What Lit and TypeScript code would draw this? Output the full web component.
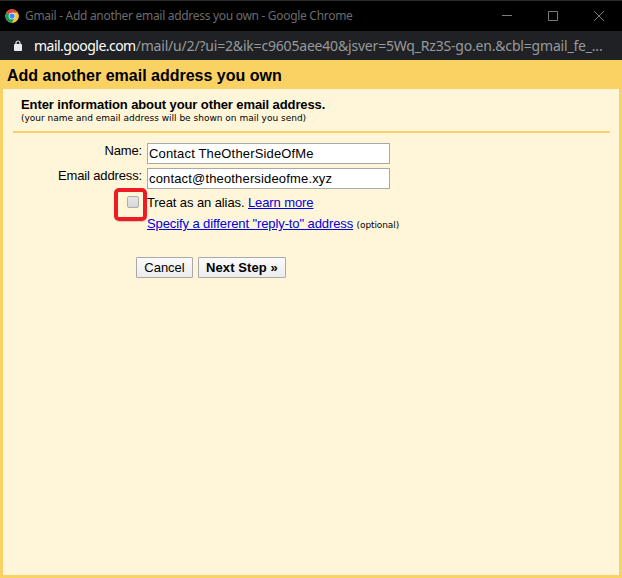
import { LitElement, html, css } from "lit";
import { customElement } from "lit/decorators.js";

@customElement("window-chrome")
class WindowChrome extends LitElement {
  static styles = css`
    :host { display: block; font-family: "Noto Sans", "Open Sans", sans-serif; white-space: nowrap; }
    .title { box-sizing: border-box; height: 31px; background: #000; border-top: 1px solid #2b2c2d; display: flex; align-items: center; padding-left: 5px; color: #6b6b6b; }
    .logo { width: 14px; height: 14px; flex: none; }
    .name { margin-left: 6px; font-size: 12px; line-height: 18px; letter-spacing: -0.3px; flex: 1; }
    .controls { width: 120px; height: 12px; flex: none; }
    .bar { height: 29px; background: #202124; display: flex; align-items: center; padding-left: 14px; color: #969a9e; }
    .lock { width: 8px; height: 12px; flex: none; }
    .url { margin-left: 12px; font-size: 14px; line-height: 20px; letter-spacing: -0.19px; }
    .host { color: #fff; letter-spacing: -0.53px; }
  `;
  render() {
    return html`
      <div class="title">
        <svg class="logo" viewBox="0 0 48 48">
          <circle cx="24" cy="24" r="23" fill="#fbc52d" />
          <path d="M24 24 4.1 12.5A23 23 0 0 1 43.9 12.5H24Z" fill="#db4437" />
          <path d="M24 24 4.1 12.5A23 23 0 0 0 24 47L34 29.7Z" fill="#169c5b" />
          <path d="M24 12.5H43.9A23 23 0 0 1 24 47L34 29.7Z" fill="#fbc52d" />
          <circle cx="24" cy="24" r="11.5" fill="#f1f1f1" />
          <circle cx="24" cy="24" r="9" fill="#4285f4" />
        </svg>
        <span class="name">Gmail - Add another email address you own - Google Chrome</span>
        <svg class="controls" viewBox="0 0 120 12" fill="none" stroke="#7b7b7b">
          <path d="M0 5.5h10M46.5 1.5h9v9h-9z" />
          <path d="M92 1l10 10M102 1 92 11" />
        </svg>
      </div>
      <div class="bar">
        <svg class="lock" viewBox="0 0 8 12">
          <path d="M2 5V3a2 2 0 0 1 4 0v2" fill="none" stroke="#e8eaed" stroke-width="1.2" />
          <rect y="4" width="8" height="7" rx=".7" fill="#e8eaed" />
        </svg>
        <span class="url"><span class="host">mail.google.com</span>/mail/u/2/?ui=2&amp;ik=c9605aee40&amp;jsver=5Wq_Rz3S-go.en.&amp;cbl=gmail_fe_...</span>
      </div>
    `;
  }
}

@customElement("app-root")
class AppRoot extends LitElement {
  static styles = css`
    :host { display: flex; flex-direction: column; height: 578px; width: 622px; overflow: hidden; background: #fad163; color: #000; font: 13px/15px "Liberation Sans", Arial, sans-serif; letter-spacing: -0.1px; white-space: nowrap; }
    window-chrome { flex: none; }
    h1 { margin: 0; height: 29px; padding: 2px 0 0 7px; box-sizing: border-box; font-size: 16px; line-height: 28px; letter-spacing: 0; flex: none; }
    .page { flex: 1; margin: 0 3px 3px; background: #fff5d9; padding: 8px 9px 0 10px; }
    .intro { height: 34px; padding-left: 8px; border-bottom: 2px solid #fad163; }
    .intro b { display: block; }
    .small { font-family: "DejaVu Sans", Verdana, sans-serif; font-size: 9px; line-height: 11px; letter-spacing: 0; }
    .intro .small { display: block; padding-top: 1px; }
    .line .small { letter-spacing: -0.1px; }
    .form { display: grid; grid-template-columns: 129px 243px; column-gap: 5px; row-gap: 4px; margin-top: 10px; }
    label { text-align: right; line-height: 15px; letter-spacing: -0.14px; }
    input[type="text"] { box-sizing: border-box; width: 243px; height: 21px; border: 1px solid #a9a9a9; padding: 0 1px; font: inherit; letter-spacing: 0.16px; color: #000; background: #fff; outline: none; border-radius: 0; }
    .options { display: grid; grid-template-columns: 33px auto; margin-left: 101px; height: 33px; }
    .mark { box-sizing: border-box; width: 33px; height: 33px; margin-top: -1px; border: 4px solid #ed1c24; border-radius: 5px; box-shadow: 0 1px 1px #8886; padding: 4px 0 0 9px; }
    .check { appearance: none; display: block; box-sizing: border-box; margin: 0; width: 12px; height: 12px; border: 1px solid #adadad; border-radius: 2px; background: linear-gradient(#e7e7e7, #d7d7d7); }
    .lines { padding-top: 6px; }
    .line { height: 21px; }
    a { color: #0000e0; text-decoration: underline; }
    .buttons { display: flex; gap: 5px; margin: 35px 0 0 123px; }
    button { box-sizing: border-box; width: 57px; height: 21px; padding: 0; border: 1px solid #a9a9a9; border-radius: 1px; background: linear-gradient(#fbfbfb, #ececec); font: inherit; letter-spacing: 0; color: #000; }
    .next { width: 88px; font-weight: bold; letter-spacing: 0.1px; }
  `;
  render() {
    return html`
      <window-chrome></window-chrome>
      <h1>Add another email address you own</h1>
      <div class="page">
        <div class="intro">
          <b>Enter information about your other email address.</b>
          <span class="small">(your name and email address will be shown on mail you send)</span>
        </div>
        <div class="form">
          <label for="name">Name:</label>
          <input id="name" type="text" value="Contact TheOtherSideOfMe" />
          <label for="email">Email address:</label>
          <input id="email" type="text" value="contact@theothersideofme.xyz" />
        </div>
        <div class="options">
          <div class="mark"><input class="check" type="checkbox" /></div>
          <div class="lines">
            <div class="line">Treat as an alias. <a>Learn more</a></div>
            <div class="line"><a>Specify a different "reply-to" address</a> <span class="small">(optional)</span></div>
          </div>
        </div>
        <div class="buttons">
          <button>Cancel</button>
          <button class="next">Next Step »</button>
        </div>
      </div>
    `;
  }
}
